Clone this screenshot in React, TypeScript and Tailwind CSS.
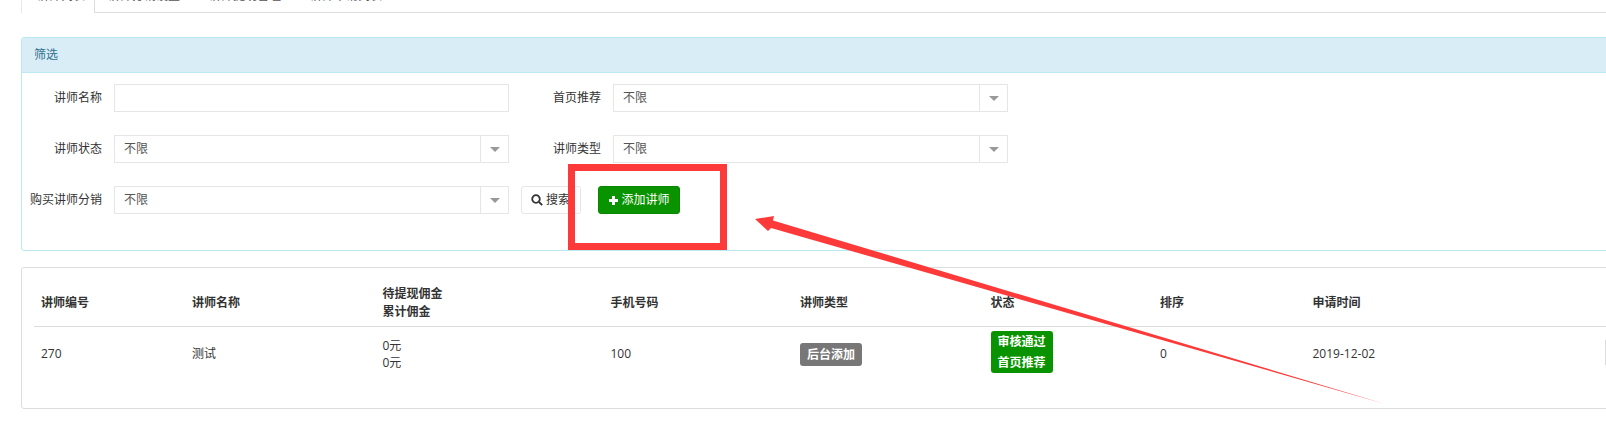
const font = { fontFamily: '"Open Sans","Noto Sans CJK SC",sans-serif' };

function Caret() {
  return <span className="w-0 h-0 border-x-[5px] border-x-transparent border-t-[5px] border-t-[#999]" />;
}

function Select({ className }: { className: string }) {
  return (
    <div className={`flex h-[28px] border border-[#e5e6e7] bg-white ${className}`}>
      <span className="flex-1 pl-[9px] leading-[26px] text-[#555]">不限</span>
      <span className="w-[28px] border-l border-[#e5e6e7] flex items-center justify-center"><Caret /></span>
    </div>
  );
}

function Label({ children, className }: { children: string; className: string }) {
  return <label className={`text-right text-[#333] leading-[28px] ${className}`}>{children}</label>;
}

const cols = [
  { w: 'w-[151px]', head: ['讲师编号'], cell: <span>270</span> },
  { w: 'w-[190.5px]', head: ['讲师名称'], cell: <span>测试</span> },
  { w: 'w-[228px]', head: ['待提现佣金', '累计佣金'], cell: <span className="block leading-[17px]">0元<br />0元</span> },
  { w: 'w-[189.5px]', head: ['手机号码'], cell: <span>100</span> },
  { w: 'w-[190.5px]', head: ['讲师类型'], cell: <span className="inline-block h-[23px] w-[62px] rounded-[3px] bg-[#777] text-center text-white font-bold leading-[23px]">后台添加</span> },
  {
    w: 'w-[169.5px]', head: ['状态'], cell: (
      <div className="-mt-[5px] w-[62px] rounded-[3px] bg-[#0a9300] text-center text-white font-bold leading-[21px]">
        <div>审核通过</div><div>首页推荐</div>
      </div>
    ),
  },
  { w: 'w-[152.5px]', head: ['排序'], cell: <span>0</span> },
  { w: 'w-[280px]', head: ['申请时间'], cell: <span>2019-12-02</span> },
];

export default function App() {
  return (
    <div className="relative w-[1606px] h-[448px] overflow-hidden bg-white text-[12px] text-[#333]" style={font}>
      {/* tabs, cut by the top edge */}
      <div className="flex h-[13px] ml-[21px]">
        <div className="w-[74px] h-[13px] overflow-hidden bg-white border-x border-[#ddd] border-l-[#e8e8e8] pl-[15px] text-[#555] shrink-0">
          <div className="-mt-[14px] leading-[20px]">讲师列表</div>
        </div>
        <div className="flex-1 h-[13px] overflow-hidden border-b border-[#ddd] pl-[13px]">
          <div className="flex gap-[29px] -mt-[14px] leading-[20px] text-[#555]">
            <span>讲师分销设置</span>
            <span>讲师提现管理</span>
            <span>讲师申请列表</span>
          </div>
        </div>
      </div>

      {/* filter panel */}
      <section className="mt-[24px] ml-[21px] w-[1600px] h-[214px] border border-[#bce8f1] rounded-[3px]">
        <header className="h-[35px] bg-[#d9edf7] border-b border-[#bce8f1] pl-[12px] leading-[34px] text-[#31708f]">筛选</header>
        <div className="pt-[11px] flex flex-col gap-[23px]">
          <div className="flex items-center">
            <Label className="w-[80px]">讲师名称</Label>
            <div className="ml-[12px] w-[395px] h-[28px] border border-[#e5e6e7]" />
            <Label className="ml-[11px] w-[81px]">首页推荐</Label>
            <Select className="ml-[12px] w-[395px]" />
          </div>
          <div className="flex items-center">
            <Label className="w-[80px]">讲师状态</Label>
            <Select className="ml-[12px] w-[395px]" />
            <Label className="ml-[11px] w-[81px]">讲师类型</Label>
            <Select className="ml-[12px] w-[395px]" />
          </div>
          <div className="flex items-start">
            <Label className="w-[80px]">购买讲师分销</Label>
            <Select className="ml-[12px] w-[395px]" />
            <button className="ml-[12px] w-[60px] h-[28px] border border-[#e7e7e7] rounded-[3px] flex items-center pl-[9px] gap-[3px] text-[#333]">
              <svg width="12" height="12" viewBox="0 0 12 12" fill="none" stroke="#333" strokeWidth="1.8"><circle cx="5" cy="5" r="3.8" /><path d="M8 8l3.2 3.2" /></svg>
              <span>搜索</span>
            </button>
            <button className="ml-[17px] w-[82px] h-[28px] bg-[#0a9300] border border-[#0a8700] rounded-[3px] flex items-center justify-center gap-[2px] text-white">
              <svg width="11" height="11" viewBox="0 0 11 11" fill="#fff"><path d="M4 1h3v3h3v3H7v3H4V7H1V4h3z" /></svg>
              <span>添加讲师</span>
            </button>
          </div>
        </div>
      </section>

      {/* table card */}
      <section className="mt-[16px] ml-[21px] w-[1600px] h-[142px] border border-[#ddd] rounded-[3px] pl-[12px] pt-[11px]">
        <div className="flex h-[48px] border-b border-[#ddd] items-center pt-[1px] font-bold leading-[18px]">
          {cols.map((c, i) => (
            <div key={i} className={`${c.w} pl-[7px] shrink-0`}>
              {c.head.map(h => <div key={h}>{h}</div>)}
            </div>
          ))}
        </div>
        <div className="flex h-[54px] items-center leading-[18px]">
          {cols.map((c, i) => (
            <div key={i} className={`${c.w} pl-[7px] shrink-0`}>{c.cell}</div>
          ))}
        </div>
      </section>

      {/* annotation */}
      <div className="absolute left-[568px] top-[164px] w-[159px] h-[86px] border-[7px] border-[#fd3a3a]" />
      <svg className="absolute left-0 top-0 pointer-events-none" width="1606" height="448">
        <path d="M755 219L774 216L773 220.5L1385 404L771 228L768 231Z" fill="#fd3a3a" />
      </svg>
      <div className="absolute right-0 top-[340px] w-[1px] h-[25px] bg-[#ddd]" />
    </div>
  );
}
